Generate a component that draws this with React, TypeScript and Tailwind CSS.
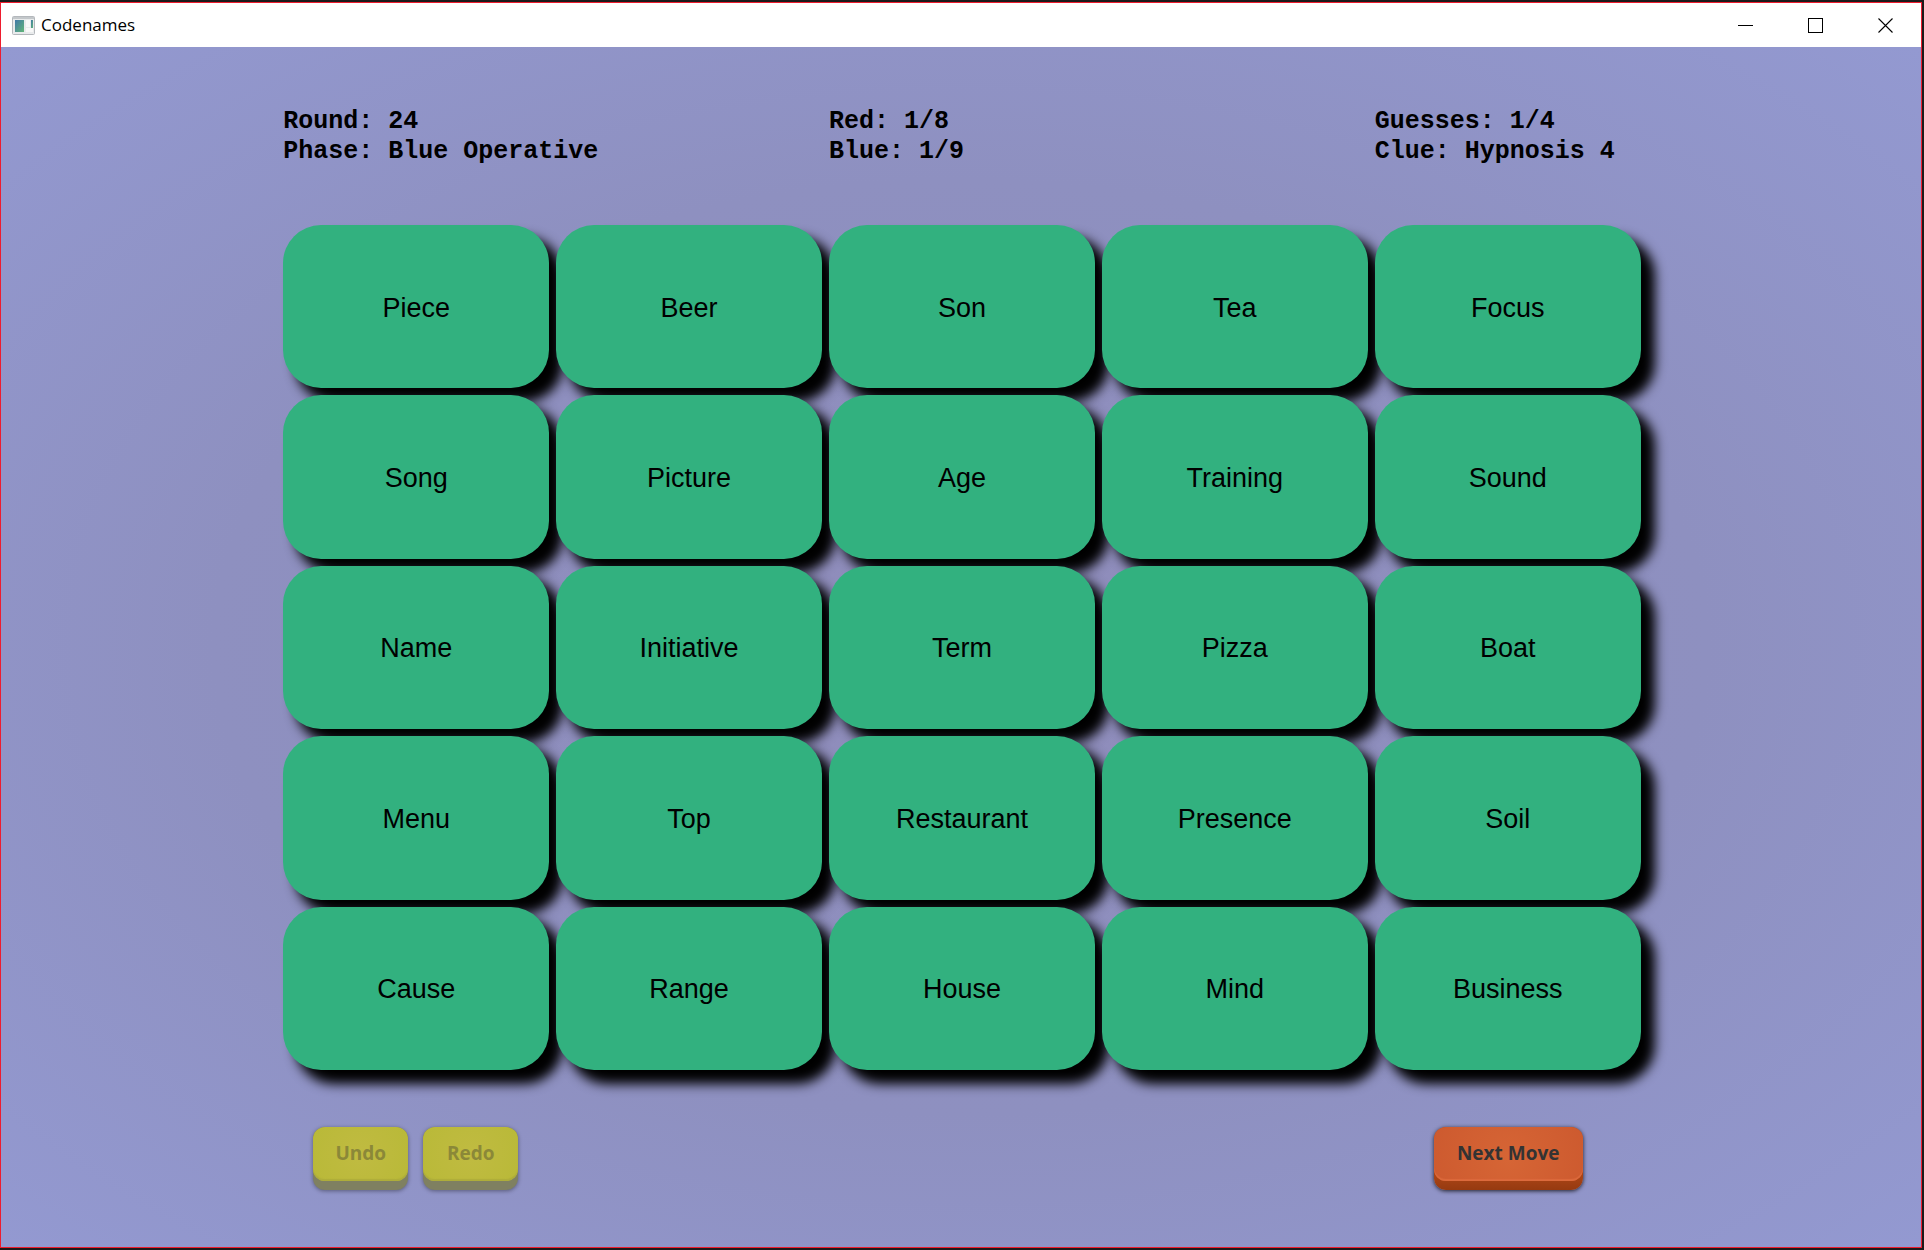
import React from "react";

const WORDS = [
  "Piece", "Beer", "Son", "Tea", "Focus",
  "Song", "Picture", "Age", "Training", "Sound",
  "Name", "Initiative", "Term", "Pizza", "Boat",
  "Menu", "Top", "Restaurant", "Presence", "Soil",
  "Cause", "Range", "House", "Mind", "Business",
];

function AppIcon() {
  return (
    <svg width="23" height="19" viewBox="0 0 23 19" aria-hidden="true">
      <defs>
        <linearGradient id="pane" x1="0" y1="0" x2="1" y2="1">
          <stop offset="0" stopColor="#3f78a8" />
          <stop offset="1" stopColor="#62b678" />
        </linearGradient>
      </defs>
      <rect x="0.5" y="0.5" width="22" height="18" rx="1" fill="#e9ebec" stroke="#b4b8bc" />
      <rect x="1" y="1" width="21" height="2" fill="#c3c7ca" />
      <rect x="3" y="4" width="9" height="12" fill="url(#pane)" />
      <rect x="14" y="4" width="4" height="7" fill="#f8f8f8" />
      <rect x="14" y="12" width="7" height="4" fill="#f8f8f8" />
      <rect x="19" y="4" width="2" height="8" fill="url(#pane)" />
    </svg>
  );
}

function TitleBar() {
  return (
    <header className="flex h-11 shrink-0 items-center justify-between bg-white text-black">
      <div className="flex items-center gap-1.5 pl-[11px]">
        <AppIcon />
        <h1 className="font-['Open_Sans',sans-serif] text-[17px] leading-6">Codenames</h1>
      </div>
      <div className="flex h-full">
        <button aria-label="Minimize" className="flex w-[69px] items-center justify-center">
          <svg width="15" height="15" viewBox="0 0 15 15" shapeRendering="crispEdges">
            <path d="M0 7.5H15" stroke="#000" />
          </svg>
        </button>
        <button aria-label="Maximize" className="flex w-[70px] items-center justify-center">
          <svg width="15" height="15" viewBox="0 0 15 15" shapeRendering="crispEdges">
            <rect x="0.5" y="0.5" width="14" height="14" fill="none" stroke="#000" />
          </svg>
        </button>
        <button aria-label="Close" className="flex w-[71px] items-center justify-center">
          <svg width="15" height="15" viewBox="0 0 15 15">
            <path d="M0.5 0.5L14.5 14.5M14.5 0.5L0.5 14.5" stroke="#000" strokeWidth="1.1" />
          </svg>
        </button>
      </div>
    </header>
  );
}

function Stat({ lines, className = "" }: { lines: string[]; className?: string }) {
  return (
    <div className={className}>
      {lines.map((line) => (
        <p key={line} className="whitespace-nowrap">{line}</p>
      ))}
    </div>
  );
}

export default function App() {
  return (
    <div className="flex min-h-screen flex-col bg-[#1b1b1b] pt-0.5 pr-0.5 pb-0.5">
      <div className="flex flex-1 flex-col border border-[#ee1c2e]">
        <TitleBar />
        <main className="flex flex-1 flex-col bg-[radial-gradient(ellipse_farthest-corner_at_center,#8f8cba_0%,#8e90c0_55%,#9399d1_100%)] pt-[60px] pr-[14.6%] pb-[57px] pl-[14.7%] text-black">
          <section className="grid grid-cols-5 gap-x-[7px] font-['Liberation_Mono',monospace] text-[25px] leading-[30px] font-bold">
            <Stat className="col-span-2" lines={["Round: 24", "Phase: Blue Operative"]} />
            <Stat className="col-span-2" lines={["Red: 1/8", "Blue: 1/9"]} />
            <Stat lines={["Guesses: 1/4", "Clue: Hypnosis 4"]} />
          </section>

          <section className="mt-[58px] grid flex-1 auto-rows-fr grid-cols-5 gap-[7px]">
            {WORDS.map((word) => (
              <button
                key={word}
                className="rounded-[38px] bg-[#32b17f] pt-0.5 font-['Liberation_Sans',Arial,sans-serif] text-[27px] leading-8 shadow-[13px_13px_12px_1px_#000]"
              >
                {word}
              </button>
            ))}
          </section>

          <footer className="mt-[57px] flex items-start justify-between pr-[58px] pl-[30px] font-['Open_Sans',sans-serif] text-[19px] leading-6 font-bold">
            <div className="flex gap-[15px]">
              {["Undo", "Redo"].map((label) => (
                <button
                  key={label}
                  disabled
                  className="h-[63px] w-[95px] rounded-xl bg-[#7f8061] pb-[9px] text-[#8b8838] shadow-[0_1px_4px_#00000066]"
                >
                  <span className="flex h-[54px] items-center justify-center rounded-xl bg-[radial-gradient(circle_at_center,#c0bb41,#b9b938)] pb-0.5 shadow-[inset_0_-2px_1px_#aead3a]">
                    {label}
                  </span>
                </button>
              ))}
            </div>
            <button className="h-[63px] w-[149px] rounded-xl bg-linear-to-b from-[#a84315] from-80% to-[#963a10] pb-[9px] text-[#333333] shadow-[0_1px_4px_#000000cc]">
              <span className="flex h-[54px] items-center justify-center rounded-xl bg-[radial-gradient(circle_at_50%_60%,#d66535,#cd5a2f)] pb-0.5 shadow-[inset_0_-2px_1px_#dc6a3c]">
                Next Move
              </span>
            </button>
          </footer>
        </main>
      </div>
    </div>
  );
}
